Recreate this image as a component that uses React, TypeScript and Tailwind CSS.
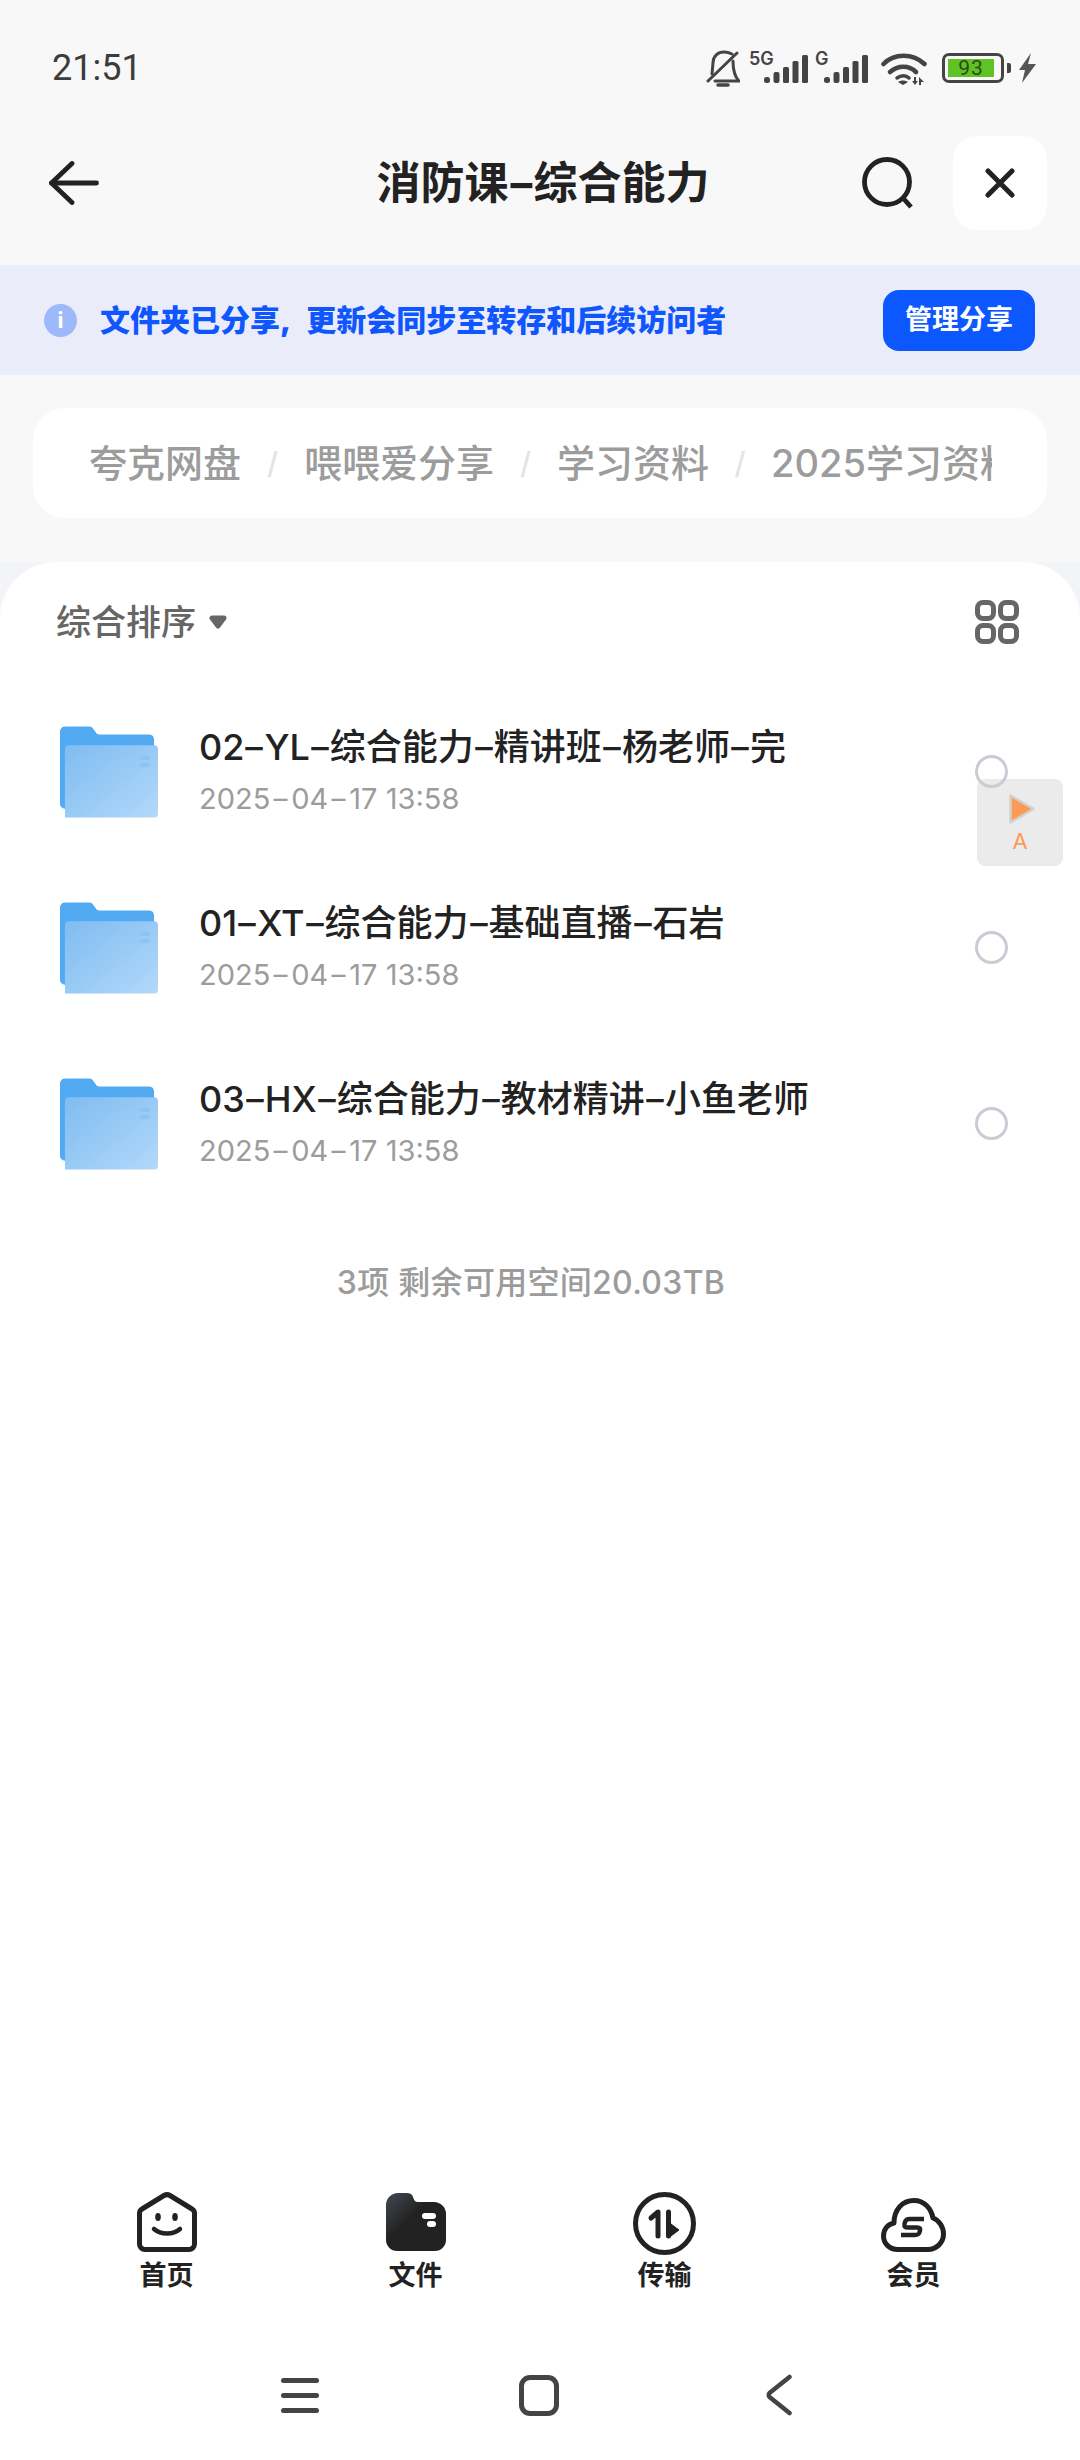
import type { ReactNode } from "react";

const folders = [
  { name: "02-YL-综合能力-精讲班-杨老师-完", date: "2025-04-17 13:58" },
  { name: "01-XT-综合能力-基础直播-石岩", date: "2025-04-17 13:58" },
  { name: "03-HX-综合能力-教材精讲-小鱼老师", date: "2025-04-17 13:58" },
];

// the app's font draws a much wider hyphen than Inter does
function Dashed({ text, className }: { text: string; className: string }) {
  const parts = text.split("-");
  return (
    <>
      {parts.map((part, i) => (
        <span key={i}>
          {i > 0 && <span className={`inline-block scale-x-[1.5] text-center ${className}`}>-</span>}
          {part}
        </span>
      ))}
    </>
  );
}

function Signal() {
  return (
    <svg className="absolute bottom-0 right-0" width="44" height="28" viewBox="0 0 44 28" fill="#444">
      <rect x="0" y="22" width="6" height="6" rx="2.5" />
      <rect x="9.5" y="17" width="6" height="11" rx="2" />
      <rect x="19" y="12" width="6" height="16" rx="1.5" />
      <rect x="28.5" y="6" width="6" height="22" rx="1.5" />
      <rect x="38" y="0" width="6" height="28" rx="1.5" />
    </svg>
  );
}

function FolderIcon() {
  return (
    <svg width="99" height="92" viewBox="0 0 100 92" className="shrink-0">
      <defs>
        <linearGradient id="folderFront" x1="0" y1="0" x2="1" y2="1">
          <stop offset="0" stopColor="#7fbcf0" />
          <stop offset="1" stopColor="#b2d8fa" />
        </linearGradient>
      </defs>
      <path d="M0 5a5 5 0 0 1 5-5h24c3 0 4 1 5 3l3 4c1 1 2 1 4 1h49a5 5 0 0 1 5 5v70H5a5 5 0 0 1-5-5z" fill="#52abf2" />
      <path d="M5 23a4 4 0 0 1 4-4h86a4 4 0 0 1 4 4v65a4 4 0 0 1-4 4H5z" fill="url(#folderFront)" />
      <rect x="80" y="30" width="11" height="4" rx="1.5" fill="#8cc4f4" />
      <rect x="80" y="37" width="11" height="4" rx="1.5" fill="#8cc4f4" />
    </svg>
  );
}

function Tab({ label, children }: { label: string; children: ReactNode }) {
  return (
    <div className="flex flex-col items-center">
      <div className="flex h-[60px] items-start">{children}</div>
      <span className="mt-[6px] text-[27px] font-bold leading-[36px] text-[#222]">{label}</span>
    </div>
  );
}

export default function App() {
  return (
    <div className="flex h-[2460px] w-[1080px] flex-col overflow-hidden bg-[#f8f8f8] font-['Inter','Noto_Sans_CJK_SC',sans-serif]">
      <div className="flex h-[136px] shrink-0 items-center justify-between pl-[52px] pr-[44px]">
        <span className="font-['Roboto',sans-serif] text-[36px] leading-[40px] text-[#3c3c3c]">21:51</span>
        <div className="flex items-center">
          <svg width="34" height="37" viewBox="0 0 34 37" fill="none" stroke="#444" strokeWidth="3" strokeLinecap="round">
            <path d="M6 24 7 13C7 6 12 2 18 2c3 0 6 1 8 2" />
            <path d="M27 11c0 9 2 16 6 20H9" />
            <path d="M2 31 31 3" />
            <path d="M12 35h10" strokeWidth="3.5" />
          </svg>
          <div className="relative ml-[9px] h-[30px] w-[59px]">
            <span className="absolute left-0 top-[-4px] text-[18px] font-semibold leading-[20px] text-[#444]">5G</span>
            <Signal />
          </div>
          <div className="relative ml-[7px] h-[30px] w-[53px]">
            <span className="absolute left-0 top-[-4px] text-[18px] font-semibold leading-[20px] text-[#444]">G</span>
            <Signal />
          </div>
          <svg className="ml-[13px]" width="46" height="33" viewBox="0 0 46 33" fill="none" stroke="#444" strokeWidth="4.6" strokeLinecap="round">
            <path d="M2.500 12C13 1 32 1 43.500 12" />
            <path d="M9 20c8-7 19-7 26 0" />
            <path d="M16 26c4-3 9-3 12 0" strokeWidth="3.5" />
            <path d="m22 33-5-3c3-2 7-2 10 0z" fill="#444" stroke="none" />
            <path d="M33 25h2v4h2l-3 4-3-4h2zM40 33h-2v-8l5 5h-3z" fill="#444" stroke="none" />
          </svg>
          <div className="ml-[15px] flex items-center gap-[3px]">
            <div className="flex h-[30px] w-[62px] items-center rounded-[7px] border-[3.5px] border-[#444] pl-[3px]">
              <div className="flex h-[18px] w-[46px] items-center justify-center bg-[#5fc324] font-['Roboto',sans-serif] text-[21px] leading-none tracking-[1px] text-[#2d4a1c]">93</div>
            </div>
            <div className="h-[10px] w-[4px] rounded-r-[2px] bg-[#444]" />
          </div>
          <svg className="ml-[7px]" width="18" height="30" viewBox="0 0 18 30" fill="#555">
            <path d="M13 0 1 17h6L4 30l14-19h-8z" />
          </svg>
        </div>
      </div>

      <div className="grid h-[94px] shrink-0 grid-cols-[1fr_auto_1fr] items-center pl-[49px] pr-[33px]">
        <svg width="50" height="44" viewBox="0 0 50 44" fill="none" stroke="#222" strokeWidth="4.8" strokeLinecap="round" strokeLinejoin="round">
          <path d="M2.500 22h45" />
          <path d="M23 2.500 2.500 22 23 41.500" />
        </svg>
        <h1 className="pr-[10px] text-[44px] font-bold leading-[56px] text-[#222]">
          <Dashed text="消防课-综合能力" className="w-[25px]" />
        </h1>
        <div className="flex items-center justify-self-end gap-[40px]">
          <svg width="51" height="52" viewBox="0 0 51 52" fill="none" stroke="#222" strokeWidth="4.8">
            <circle cx="25" cy="25" r="22.5" />
            <path d="m41 41 8 9" />
          </svg>
          <div className="flex h-[94px] w-[94px] items-center justify-center rounded-[24px] bg-white">
            <svg width="30" height="30" viewBox="0 0 30 30" stroke="#222" strokeWidth="5" strokeLinecap="round">
              <path d="M3 3l24 24M27 3 3 27" />
            </svg>
          </div>
        </div>
      </div>

      <div className="mt-[35px] flex h-[110px] shrink-0 items-center justify-between bg-[#eaedf9] pl-[44px] pr-[45px]">
        <div className="flex items-center gap-[23px]">
          <div className="flex h-[33px] w-[33px] items-center justify-center rounded-full bg-[#9db9fb] text-[22px] font-bold leading-none text-white">i</div>
          <span className="text-[30px] font-black leading-[40px] text-[#0f56ff]">
            <span className="mr-[9px]">文件夹已分享,</span> 更新会同步至转存和后续访问者
          </span>
        </div>
        <div className="flex h-[61px] w-[152px] items-center justify-center rounded-[16px] bg-[#0d57ff] text-[27px] font-bold text-white">管理分享</div>
      </div>

      <div className="mx-[33px] mt-[33px] flex h-[110px] shrink-0 items-center rounded-[32px] bg-white pl-[56px] pr-[55px] text-[38px] font-medium text-[#9c9c9c]">
        <div className="flex w-full items-center overflow-hidden whitespace-nowrap">
          <span className="shrink-0">夸克网盘</span>
          <span className="w-[63px] shrink-0 text-center text-[30px] font-medium text-[#e4e4e4]">/</span>
          <span className="shrink-0">喂喂爱分享</span>
          <span className="w-[63px] shrink-0 text-center text-[30px] font-medium text-[#e4e4e4]">/</span>
          <span className="shrink-0">学习资料</span>
          <span className="w-[62px] shrink-0 text-center text-[30px] font-medium text-[#e4e4e4]">/</span>
          <span className="shrink-0">2025学习资料</span>
        </div>
      </div>

      <div className="mt-[44px] flex min-h-0 flex-1 flex-col bg-[#f3f4f8]">
        <main className="flex min-h-0 flex-1 flex-col rounded-t-[56px] bg-white">
          <div className="flex h-[120px] shrink-0 items-center justify-between pl-[56px] pr-[61px]">
            <div className="flex items-center gap-[13px]">
              <span className="text-[35px] font-medium leading-[44px] text-[#666]">综合排序</span>
              <svg width="18" height="14" viewBox="0 0 18 14">
                <path d="M3 3h12L9 11z" fill="#666" stroke="#666" strokeWidth="5" strokeLinejoin="round" />
              </svg>
            </div>
            <svg width="44" height="44" viewBox="0 0 44 44" fill="none" stroke="#666" strokeWidth="5">
              <rect x="2.500" y="2.500" width="16" height="16" rx="5.500" />
              <rect x="25.500" y="2.500" width="16" height="16" rx="5.500" />
              <rect x="2.500" y="25.500" width="16" height="16" rx="5.500" />
              <rect x="25.500" y="25.500" width="16" height="16" rx="5.500" />
            </svg>
          </div>

          <div className="mt-[2px] flex shrink-0 flex-col">
            {folders.map((f) => (
              <div key={f.name} className="flex h-[176px] items-center pl-[60px] pr-[72px]">
                <FolderIcon />
                <div className="ml-[40px] flex-1">
                  <div className="text-[36px] font-medium leading-[50px] text-[#222]">
                    <Dashed text={f.name} className="w-[20px]" />
                  </div>
                  <div className="-mb-[2px] mt-[2px] text-[29px] leading-[50px] text-[#9c9c9c]">
                    <Dashed text={f.date} className="w-[21px]" />
                  </div>
                </div>
                <div className="relative z-10 mb-[2px] h-[33px] w-[33px] rounded-full border-[3.5px] border-[#c9ccd2]" />
              </div>
            ))}
          </div>

          <p className="mt-[49px] shrink-0 pr-[18px] text-center text-[32px] font-medium leading-[44px] tracking-[0.3px] text-[#9c9c9c]">3项 剩余可用空间20.03TB</p>

          <nav className="mb-[36px] mt-auto grid shrink-0 grid-cols-4 px-[42px]">
            <Tab label="首页">
              <svg width="60" height="60" viewBox="0 0 60 60" fill="none" stroke="#222" strokeWidth="5" strokeLinejoin="round" strokeLinecap="round">
                <path d="M2.500 21a5 5 0 0 1 2.500-4L27 3.500a6 6 0 0 1 6 0L55 17a5 5 0 0 1 2.500 4v31a5.500 5.500 0 0 1-5.500 5.500H8A5.500 5.500 0 0 1 2.500 52z" />
                <ellipse cx="21" cy="25" rx="2.8" ry="4" fill="#222" stroke="none" />
                <ellipse cx="38" cy="25" rx="2.8" ry="4" fill="#222" stroke="none" />
                <path d="M17 37c7 6 19 6 26 0" strokeWidth="4.5" />
              </svg>
            </Tab>
            <Tab label="文件">
              <svg width="60" height="60" viewBox="0 0 60 60">
                <defs>
                  <linearGradient id="tabFolder" x1="0" y1="0" x2="0.7" y2="0.7">
                    <stop offset="0" stopColor="#424a54" />
                    <stop offset="0.6" stopColor="#222" />
                  </linearGradient>
                </defs>
                <path d="M0 13A12 12 0 0 1 12 1h9c3 0 5 1 6 4 1 3 2 5 5 5h16a12 12 0 0 1 12 12v26a11 11 0 0 1-11 11H11A11 11 0 0 1 0 48z" fill="url(#tabFolder)" />
                <rect x="36" y="21" width="14" height="6" rx="3" fill="#fff" />
                <rect x="41" y="29" width="9" height="6" rx="3" fill="#fff" />
              </svg>
            </Tab>
            <Tab label="传输">
              <svg width="63" height="63" viewBox="0 0 63 63" fill="none" stroke="#222" strokeWidth="5" strokeLinecap="round" strokeLinejoin="round">
                <circle cx="31.500" cy="31.500" r="29" />
                <path d="M25 44V20l-7 6" strokeWidth="5" />
                <path d="M35.500 20v24" strokeWidth="5" />
                <path d="M38 32l8 6-8 6z" fill="#222" stroke="#222" strokeWidth="1" />
              </svg>
            </Tab>
            <Tab label="会员">
              <svg width="65" height="60" viewBox="0 0 65 60" fill="none" stroke="#222" strokeWidth="5" strokeLinejoin="round">
                <path d="M17 57.500C8 57.500 2.500 51 2.500 44 2.500 37 7 32 13 31 13 18 21 8.500 33 8.500 43 8.500 50 16 52 26 58 28 62.500 35 62.500 42 62.500 51 55 57.500 47 57.500z" />
                <path d="M43 27H29c-3 0-4.500 1-5 3l-.5 2c-.5 3 1 3.500 3.500 3.500h9c3 0 3.500 1 3 3l-.3 1c-.5 3-2 3.500-5 3.500H20" strokeWidth="4.500" />
              </svg>
            </Tab>
          </nav>

          <div className="grid h-[130px] shrink-0 grid-cols-3 items-center px-[180px]">
            <div className="flex flex-col gap-[10px] justify-self-center">
              <div className="h-[5px] w-[38px] rounded-full bg-[#444]" />
              <div className="h-[5px] w-[38px] rounded-full bg-[#444]" />
              <div className="h-[5px] w-[38px] rounded-full bg-[#444]" />
            </div>
            <div className="mr-[2px] h-[41px] w-[40px] justify-self-center rounded-[11px] border-[5px] border-[#444]" />
            <svg className="mr-[2px] justify-self-center" width="26" height="42" viewBox="0 0 26 42" fill="none" stroke="#444" strokeWidth="4.5" strokeLinecap="round" strokeLinejoin="round">
              <path d="M23.500 3 3.500 19c-1 1-1 3 0 4l20 16" />
            </svg>
          </div>
        </main>
      </div>

      <div className="absolute left-[977px] top-[779px] flex h-[87px] w-[86px] flex-col items-center justify-center rounded-[8px] bg-[#ebebeb]">
        <svg className="ml-[4px]" width="28" height="32" viewBox="0 0 28 32">
          <path d="M2.500 2.500v27l23-13.500z" fill="#fb9a55" stroke="#d4d0cc" strokeWidth="2.500" strokeLinejoin="round" />
        </svg>
        <span className="mt-[4px] text-[22px] leading-[24px] text-[#fb9a55]">A</span>
      </div>
    </div>
  );
}
